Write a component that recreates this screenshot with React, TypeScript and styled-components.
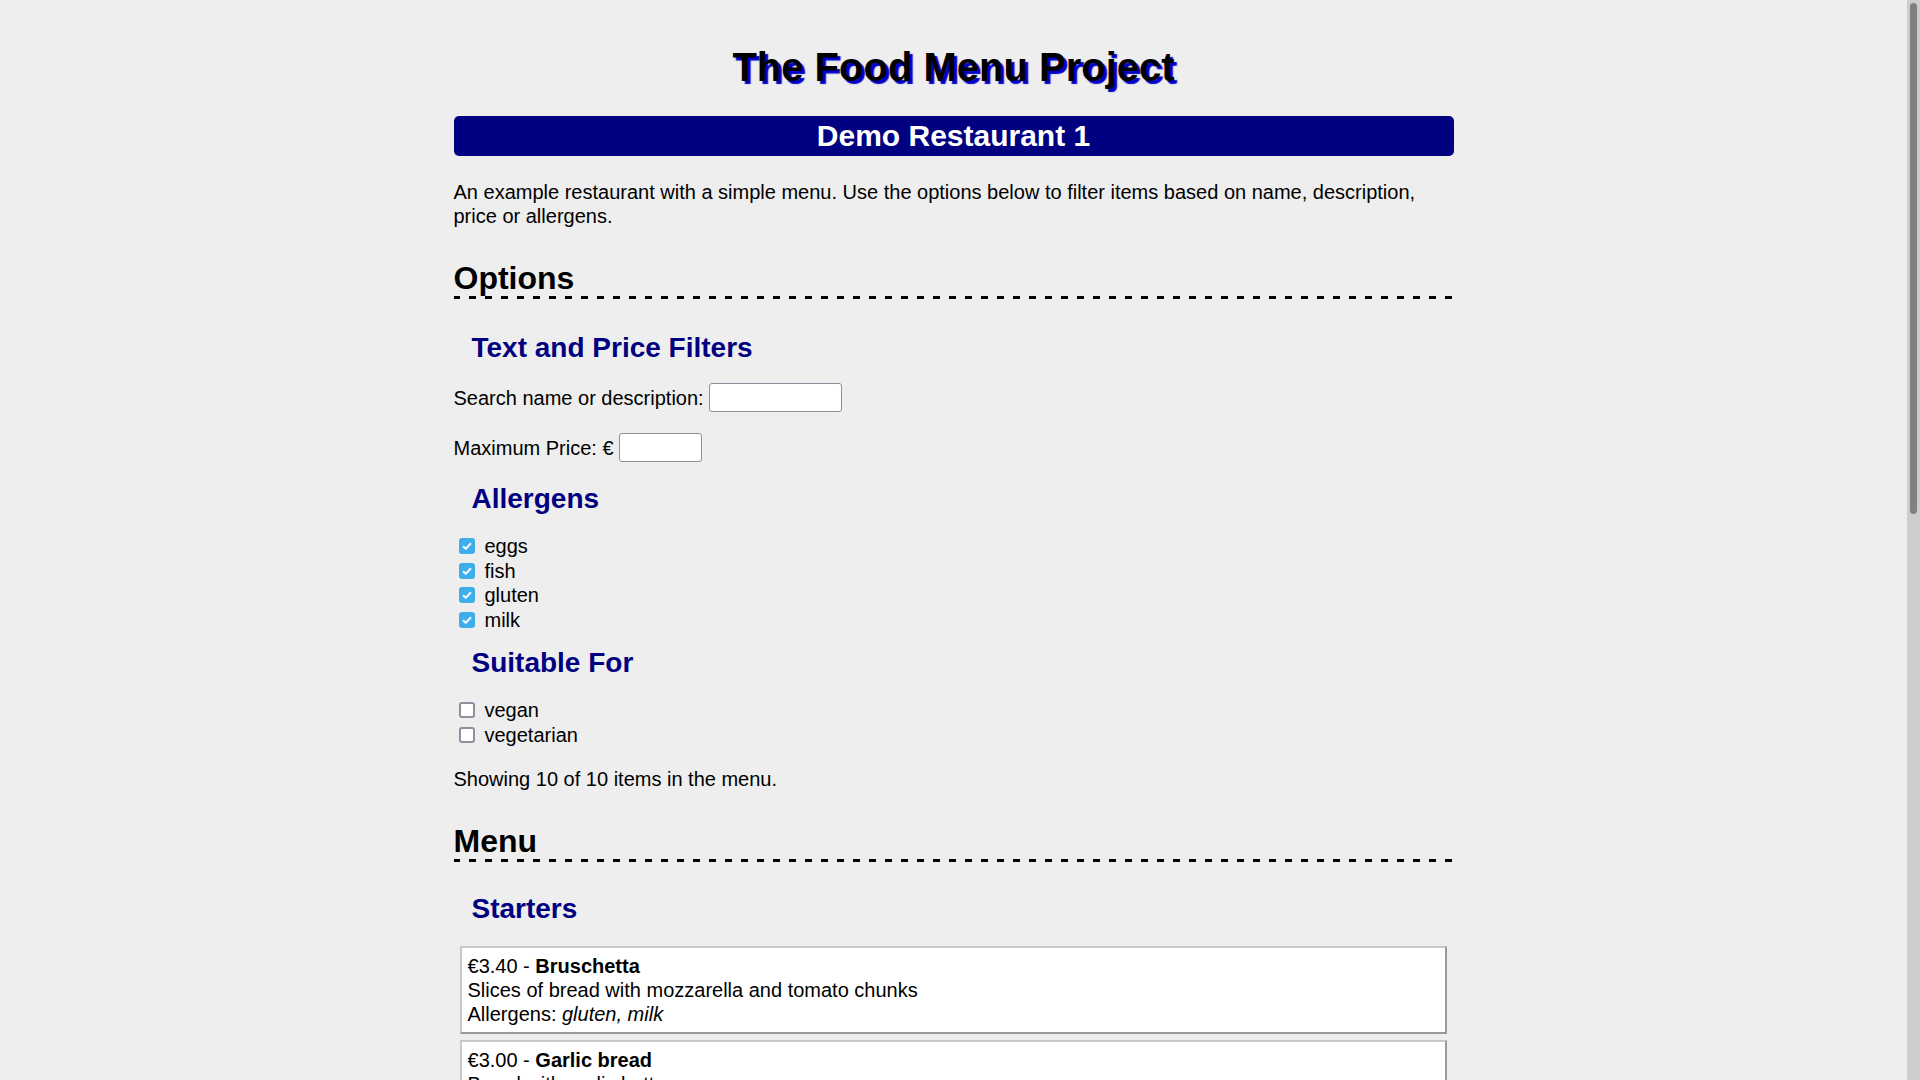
import React, { useEffect, useState } from 'react'
import styled, { createGlobalStyle } from 'styled-components'

type Dish = {
    name: string
    description: string
    price: number
    category: string
    allergens: string[]
    suitable: string[]
}

const ALLERGENS = ['eggs', 'fish', 'gluten', 'milk']
const DIETS = ['vegan', 'vegetarian']
const CATEGORIES = ['Starters', 'Mains', 'Desserts']

const DISHES: Dish[] = [
    { name: 'Bruschetta', description: 'Slices of bread with mozzarella and tomato chunks', price: 3.4, category: 'Starters', allergens: ['gluten', 'milk'], suitable: ['vegetarian'] },
    { name: 'Garlic bread', description: 'Bread with garlic butter', price: 3.0, category: 'Starters', allergens: ['gluten', 'milk'], suitable: ['vegetarian'] },
    { name: 'Prawn cocktail', description: 'Prawns in a creamy marie rose sauce', price: 5.2, category: 'Starters', allergens: ['eggs', 'fish'], suitable: [] },
    { name: 'Fish and chips', description: 'Battered cod with chips and mushy peas', price: 11.5, category: 'Mains', allergens: ['fish', 'gluten'], suitable: [] },
    { name: 'Spaghetti carbonara', description: 'Spaghetti with bacon, egg and parmesan', price: 10.8, category: 'Mains', allergens: ['eggs', 'gluten', 'milk'], suitable: [] },
    { name: 'Vegetable curry', description: 'Mixed vegetables in a mild coconut curry with rice', price: 9.5, category: 'Mains', allergens: [], suitable: ['vegan', 'vegetarian'] },
    { name: 'Beef burger', description: 'Beef patty with cheese, lettuce and tomato in a bun', price: 12.0, category: 'Mains', allergens: ['gluten', 'milk'], suitable: [] },
    { name: 'Chocolate cake', description: 'Rich chocolate sponge with chocolate icing', price: 4.8, category: 'Desserts', allergens: ['eggs', 'gluten', 'milk'], suitable: ['vegetarian'] },
    { name: 'Fruit salad', description: 'Seasonal fresh fruit', price: 3.5, category: 'Desserts', allergens: [], suitable: ['vegan', 'vegetarian'] },
    { name: 'Ice cream', description: 'Two scoops of vanilla ice cream', price: 3.2, category: 'Desserts', allergens: ['milk'], suitable: ['vegetarian'] },
]

const SCROLLBAR = 13

const GlobalStyle = createGlobalStyle`
    html {
        background: #eeeeee;
        scrollbar-width: none;
    }
    html::-webkit-scrollbar {
        display: none;
    }
    body {
        margin: 0 ${SCROLLBAR}px 0 0;
        font-family: "Liberation Sans", Arial, sans-serif;
        font-size: 20px;
        line-height: 24px;
        color: #000;
    }
`

const Page = styled.div`
    max-width: 1000px;
    margin: 0 auto;
    padding-bottom: 240px;
`

/* page scrollbar, kept at the right edge of the window */
const ScrollTrack = styled.div`
    position: fixed;
    top: 0;
    right: 0;
    bottom: 0;
    width: ${SCROLLBAR}px;
    background: #cdcdcd;
`

const ScrollThumb = styled.div`
    position: absolute;
    left: 3px;
    right: 3px;
    border-radius: 4px;
    background: #808080;
`

const Title = styled.h1`
    margin: 43px 0 25px;
    font-size: 40px;
    line-height: 48px;
    font-weight: bold;
    text-align: center;
    text-shadow: 3px 3px 1px #0000c8;
`

const Banner = styled.h2`
    margin: 0;
    height: 40px;
    line-height: 40px;
    font-size: 30px;
    font-weight: bold;
    text-align: center;
    color: #fff;
    background: #000080;
    border-radius: 5px;
`

const Intro = styled.p`
    margin: 24px 0 0;
`

/* dashed rule drawn as a repeating gradient */
const SectionTitle = styled.h2`
    margin: 32px 0 0;
    padding-bottom: 3px;
    font-size: 32px;
    line-height: 36px;
    background: linear-gradient(to right, #000 7px, transparent 7px) -1px 100% / 16px 3px repeat-x;
`

const GroupTitle = styled.h3<{ $top: number }>`
    margin: ${p => p.$top}px 0 0;
    padding-left: 18px;
    font-size: 28px;
    line-height: 32px;
    color: #000080;
`

const FieldRow = styled.label<{ $top: number }>`
    display: flex;
    align-items: center;
    gap: 5.5px;
    height: 29px;
    margin-top: ${p => p.$top}px;
`

const TextBox = styled.input<{ $width: number }>`
    box-sizing: border-box;
    width: ${p => p.$width}px;
    height: 29px;
    padding: 2px 4px;
    border: 1px solid #8f8f9d;
    border-radius: 3px;
    background: #fff;
    font: inherit;
    font-size: 16px;
    outline: none;
`

const CheckList = styled.div<{ $top: number }>`
    margin-top: ${p => p.$top}px;
`

const CheckRow = styled.label`
    display: flex;
    align-items: center;
    height: 24.5px;
    cursor: pointer;

    & > input {
        position: absolute;
        opacity: 0;
        width: 0;
        height: 0;
    }
`

const CheckBox = styled.span<{ $on: boolean }>`
    box-sizing: border-box;
    display: flex;
    align-items: center;
    justify-content: center;
    width: 16px;
    height: 16px;
    margin: 0 10px 0 5px;
    border-radius: 3px;
    border: 2px solid ${p => (p.$on ? '#3daee9' : '#8f8f9d')};
    background: ${p => (p.$on ? '#3daee9' : '#fff')};
`

const Summary = styled.p`
    margin: 20px 0 0;
`

const DishList = styled.div`
    margin-top: 21px;
`

const DishCard = styled.div`
    margin: 0 7px 6px 6px;
    padding: 6px;
    background: #fff;
    border: 2px solid;
    border-color: #c8c8c8 #999 #999 #c8c8c8;
`

const DishName = styled.b`
    font-weight: bold;
`

function Check({ label, on, onToggle }: { label: string; on: boolean; onToggle: () => void }) {
    return (
        <CheckRow>
            <input type="checkbox" checked={on} onChange={onToggle} />
            <CheckBox $on={on}>
                {on && (
                    <svg width="10" height="8" viewBox="0 0 10 8">
                        <path d="M1 4.2l2.8 2.6L9 1.2" stroke="#f4f8ff" strokeWidth="2" fill="none" />
                    </svg>
                )}
            </CheckBox>
            {label}
        </CheckRow>
    )
}

function Scrollbar() {
    const [bar, setBar] = useState({ start: 0, size: 0.47 })

    useEffect(() => {
        const update = () => {
            const full = document.documentElement.scrollHeight
            const view = window.innerHeight
            setBar({ start: window.scrollY / full, size: Math.min(1, view / full) })
        }
        update()
        window.addEventListener('scroll', update)
        window.addEventListener('resize', update)
        return () => {
            window.removeEventListener('scroll', update)
            window.removeEventListener('resize', update)
        }
    }, [])

    if (bar.size >= 1) return null
    return (
        <ScrollTrack>
            <ScrollThumb
                style={{
                    top: `calc(3px + (100% - 6px) * ${bar.start})`,
                    height: `calc((100% - 6px) * ${bar.size})`,
                }}
            />
        </ScrollTrack>
    )
}

export default function App() {
    const [search, setSearch] = useState('')
    const [maxPrice, setMaxPrice] = useState('')
    const [allowed, setAllowed] = useState<string[]>(ALLERGENS)
    const [diets, setDiets] = useState<string[]>([])

    const toggle = (list: string[], set: (v: string[]) => void, key: string) =>
        set(list.includes(key) ? list.filter(k => k !== key) : [...list, key])

    const limit = parseFloat(maxPrice)
    const term = search.trim().toLowerCase()
    const shown = DISHES.filter(d => {
        if (term && !`${d.name} ${d.description}`.toLowerCase().includes(term)) return false
        if (!isNaN(limit) && d.price > limit) return false
        if (d.allergens.some(a => !allowed.includes(a))) return false
        if (diets.some(s => !d.suitable.includes(s))) return false
        return true
    })

    return (
        <Page>
            <GlobalStyle />
            <Scrollbar />
            <Title>The Food Menu Project</Title>
            <Banner>Demo Restaurant 1</Banner>
            <Intro>
                An example restaurant with a simple menu. Use the options below to filter items based on name, description,
                price or allergens.
            </Intro>

            <SectionTitle>Options</SectionTitle>
            <GroupTitle $top={33}>Text and Price Filters</GroupTitle>
            <FieldRow $top={19}>
                Search name or description:
                <TextBox $width={133} value={search} onChange={e => setSearch(e.target.value)} />
            </FieldRow>
            <FieldRow $top={21}>
                Maximum Price: €
                <TextBox $width={83} value={maxPrice} onChange={e => setMaxPrice(e.target.value)} />
            </FieldRow>

            <GroupTitle $top={21}>Allergens</GroupTitle>
            <CheckList $top={19}>
                {ALLERGENS.map(a => (
                    <Check key={a} label={a} on={allowed.includes(a)} onToggle={() => toggle(allowed, setAllowed, a)} />
                ))}
            </CheckList>

            <GroupTitle $top={15}>Suitable For</GroupTitle>
            <CheckList $top={19}>
                {DIETS.map(s => (
                    <Check key={s} label={s} on={diets.includes(s)} onToggle={() => toggle(diets, setDiets, s)} />
                ))}
            </CheckList>

            <Summary>
                Showing {shown.length} of {DISHES.length} items in the menu.
            </Summary>

            <SectionTitle>Menu</SectionTitle>
            {CATEGORIES.map((cat, i) => (
                <React.Fragment key={cat}>
                    <GroupTitle $top={i === 0 ? 31 : 24}>{cat}</GroupTitle>
                    <DishList>
                        {shown
                            .filter(d => d.category === cat)
                            .map(d => (
                                <DishCard key={d.name}>
                                    €{d.price.toFixed(2)} - <DishName>{d.name}</DishName>
                                    <br />
                                    {d.description}
                                    <br />
                                    Allergens: <i>{d.allergens.length ? d.allergens.join(', ') : 'none'}</i>
                                </DishCard>
                            ))}
                    </DishList>
                </React.Fragment>
            ))}
        </Page>
    )
}
